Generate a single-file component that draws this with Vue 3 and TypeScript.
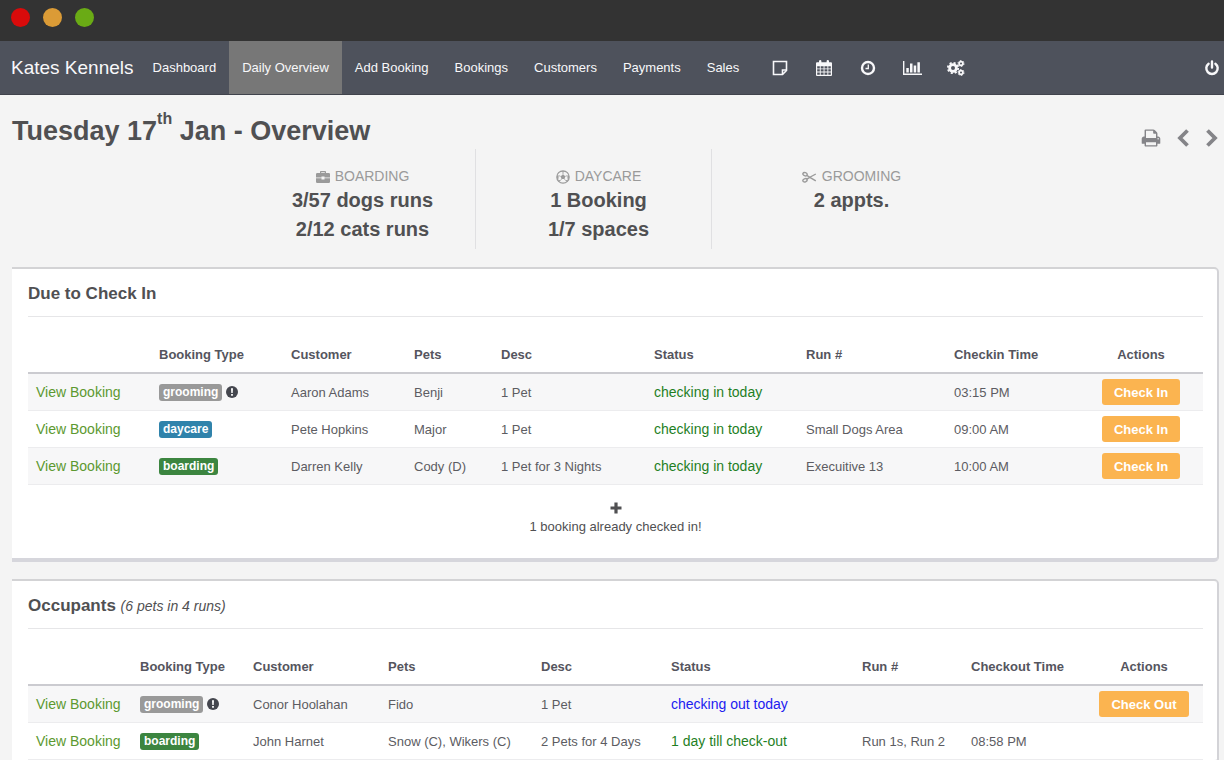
<script setup lang="ts">
interface Column { label: string; size: number }
interface Row {
  type: 'grooming' | 'daycare' | 'boarding'
  customer: string
  pets: string
  desc: string
  status: string
  leaving?: boolean
  run: string
  time: string
  action?: string
}
interface Panel {
  id: string
  title: string
  note?: string
  columns: Column[]
  rows: Row[]
  footer?: string
}

const links = ['Dashboard', 'Daily Overview', 'Add Booking', 'Bookings', 'Customers', 'Payments', 'Sales']
const active = 'Daily Overview'

const panels: Panel[] = [
  {
    id: 'checkin',
    title: 'Due to Check In',
    columns: [
      { label: '', size: 123 },
      { label: 'Booking Type', size: 132 },
      { label: 'Customer', size: 123 },
      { label: 'Pets', size: 87 },
      { label: 'Desc', size: 153 },
      { label: 'Status', size: 152 },
      { label: 'Run #', size: 148 },
      { label: 'Checkin Time', size: 133 },
      { label: 'Actions', size: 124 },
    ],
    rows: [
      { type: 'grooming', customer: 'Aaron Adams', pets: 'Benji', desc: '1 Pet', status: 'checking in today', run: '', time: '03:15 PM', action: 'Check In' },
      { type: 'daycare', customer: 'Pete Hopkins', pets: 'Major', desc: '1 Pet', status: 'checking in today', run: 'Small Dogs Area', time: '09:00 AM', action: 'Check In' },
      { type: 'boarding', customer: 'Darren Kelly', pets: 'Cody (D)', desc: '1 Pet for 3 Nights', status: 'checking in today', run: 'Execuitive 13', time: '10:00 AM', action: 'Check In' },
    ],
    footer: '1 booking already checked in!',
  },
  {
    id: 'occupants',
    title: 'Occupants',
    note: '(6 pets in 4 runs)',
    columns: [
      { label: '', size: 104 },
      { label: 'Booking Type', size: 113 },
      { label: 'Customer', size: 135 },
      { label: 'Pets', size: 153 },
      { label: 'Desc', size: 130 },
      { label: 'Status', size: 191 },
      { label: 'Run #', size: 109 },
      { label: 'Checkout Time', size: 122 },
      { label: 'Actions', size: 118 },
    ],
    rows: [
      { type: 'grooming', customer: 'Conor Hoolahan', pets: 'Fido', desc: '1 Pet', status: 'checking out today', leaving: true, run: '', time: '', action: 'Check Out' },
      { type: 'boarding', customer: 'John Harnet', pets: 'Snow (C), Wikers (C)', desc: '2 Pets for 4 Days', status: '1 day till check-out', run: 'Run 1s, Run 2', time: '08:58 PM' },
    ],
  },
]

function share(panel: Panel, column: Column): string {
  const total = panel.columns.reduce((sum, c) => sum + c.size, 0)
  return `${(column.size / total) * 100}%`
}
</script>

<template>
  <div class="app">
    <div class="titlebar">
      <span class="dot red"></span>
      <span class="dot amber"></span>
      <span class="dot green"></span>
    </div>

    <nav class="nav">
      <a class="brand" href="#">Kates Kennels</a>
      <a v-for="link in links" :key="link" href="#" class="nav-link" :class="{ active: link === active }">{{ link }}</a>
      <div class="nav-icons">
        <a href="#" class="nav-icon" aria-label="Notes">
          <svg viewBox="0 0 16 16" width="16" height="16" fill="none" stroke="currentColor" stroke-width="1.6">
            <path d="M1.500 1.500h13v9l-4 4h-9z" /><path d="M14.500 10h-4v4.500" />
          </svg>
        </a>
        <a href="#" class="nav-icon" aria-label="Calendar">
          <svg viewBox="0 0 16 16" width="16" height="16" fill="currentColor">
            <path fill-rule="evenodd" d="M1 2.300h2V1.200Q3 0 4.200 0T5.400 1.200v1.100h5.200V1.200Q10.600 0 11.800 0T13 1.200v1.100h2q1 0 1 1V15q0 1-1 1H1q-1 0-1-1V3.300q0-1 1-1zM1.200 6.200v2.300h2.600V6.200zm3.500 0v2.300h2.900V6.200zm3.800 0v2.300h2.900V6.200zm3.800 0v2.300h2.500V6.200zM1.200 9.300v2.300h2.600V9.300zm3.500 0v2.300h2.900V9.300zm3.800 0v2.300h2.900V9.300zm3.800 0v2.300h2.500V9.300zM1.200 12.400v2.400h2.600v-2.400zm3.500 0v2.400h2.900v-2.400zm3.800 0v2.400h2.900v-2.400zm3.800 0v2.400h2.500v-2.400z" />
          </svg>
        </a>
        <a href="#" class="nav-icon" aria-label="Time">
          <svg viewBox="0 0 16 16" width="16" height="16" fill="none" stroke="currentColor">
            <circle cx="8" cy="8" r="6" stroke-width="2.400" /><path d="M8.300 4.500v4H5.500" stroke-width="1.300" />
          </svg>
        </a>
        <a href="#" class="nav-icon" aria-label="Reports">
          <svg viewBox="0 0 19 16" width="19" height="16" fill="currentColor">
            <path d="M0 1h1.400v12.600H19V15H0zM3.300 8h2.500v4.500H3.300zM7 3.500h2.500v9H7zM10.700 5.500h2.500v7h-2.500zM14.400 2.300h2.500v10.200h-2.500z" />
          </svg>
        </a>
        <a href="#" class="nav-icon" aria-label="Settings">
          <svg viewBox="0 0 18 16" width="18" height="16" fill="none" stroke="currentColor">
            <circle cx="6" cy="8" r="3.400" stroke-width="2.800" />
            <circle cx="6" cy="8" r="5.200" stroke-width="1.800" stroke-dasharray="2.080 2" />
            <circle cx="14" cy="3.500" r="1.900" stroke-width="1.800" />
            <circle cx="14" cy="3.500" r="3" stroke-width="1" stroke-dasharray="1.570 1.570" />
            <circle cx="14" cy="12.500" r="1.900" stroke-width="1.800" />
            <circle cx="14" cy="12.500" r="3" stroke-width="1" stroke-dasharray="1.570 1.570" />
          </svg>
        </a>
      </div>
      <a href="#" class="power" aria-label="Log out">
        <svg viewBox="0 0 16 16" width="16" height="16" fill="none" stroke="currentColor" stroke-width="2.400" stroke-linecap="round">
          <path d="M4.600 3.700a5.700 5.700 0 1 0 6.800 0M8 1.500v6" />
        </svg>
      </a>
    </nav>

    <main class="content">
      <header class="heading">
        <h1>Tuesday 17<sup>th</sup> Jan - Overview</h1>
        <div class="tools">
          <button type="button" aria-label="Print">
            <svg viewBox="0 0 1792 1792" width="20" height="20" fill="currentColor">
              <path d="M448 1536h896v-256h-896v256zm0-640h896v-384h-160q-40 0-68-28t-28-68v-160h-640v640zm1152 64q0-26-19-45t-45-19-45 19-19 45 19 45 45 19 45-19 19-45zm128 0v416q0 13-9.500 22.500t-22.500 9.500h-224v160q0 40-28 68t-68 28h-960q-40 0-68-28t-28-68v-160h-224q-13 0-22.500-9.500t-9.500-22.500v-416q0-79 56.500-135.500t135.500-56.500h64v-544q0-40 28-68t68-28h672q40 0 88 20t76 48l152 152q28 28 48 76t20 88v256h64q79 0 135.500 56.500t56.500 135.500z" />
            </svg>
          </button>
          <button type="button" aria-label="Previous day">
            <svg viewBox="0 0 14 20" width="14" height="20" fill="none" stroke="currentColor" stroke-width="3.800"><path d="M11.500 2.500 4 10l7.500 7.500" /></svg>
          </button>
          <button type="button" aria-label="Next day">
            <svg viewBox="0 0 14 20" width="14" height="20" fill="none" stroke="currentColor" stroke-width="3.800"><path d="M2.500 2.500 10 10l-7.500 7.500" /></svg>
          </button>
        </div>
      </header>

      <section class="stats">
        <div class="stat">
          <div class="stat-label">
            <svg viewBox="0 0 14 14" width="14" height="14" fill="currentColor">
              <path fill-rule="evenodd" d="M4 3V1.800Q4 1 4.800 1h4.400q.8 0 .8.800V3h2.800q1.200 0 1.200 1.200V7.500H8.500v-1h-3v1H0V4.200Q0 3 1.200 3zm1.200 0h3.600V2.200H5.200zM0 8.300h5.500v1.200h3V8.300H14v3.500q0 1.200-1.200 1.200H1.200Q0 13 0 11.800z" />
            </svg>
            BOARDING
          </div>
          <strong>3/57 dogs runs</strong>
          <strong>2/12 cats runs</strong>
        </div>
        <div class="stat">
          <div class="stat-label">
            <svg viewBox="0 0 14 14" width="14" height="14" fill="none" stroke="currentColor">
              <circle cx="7" cy="7" r="6.200" stroke-width="1.200" />
              <path d="m7 4.600 2.400 1.700-.9 2.800h-3l-.9-2.800z" fill="currentColor" stroke="none" />
              <path d="M7 4.600V2.800M9.400 6.300l2-.7M8.500 9.100l1.200 1.600M5.500 9.100l-1.200 1.600M4.600 6.300l-2-.7" stroke-width=".8" />
              <path d="M4.800 1.200 7 2.800l2.200-1.600zM13 5.200l-1.600.5.100 3 1.300.2zM1 5.200l1.600.5-.1 3-1.300.2zM3 12l1.300-1.500-2.200-1zM11 12l-1.300-1.500 2.200-1z" fill="currentColor" stroke="none" />
            </svg>
            DAYCARE
          </div>
          <strong>1 Booking</strong>
          <strong>1/7 spaces</strong>
        </div>
        <div class="stat">
          <div class="stat-label">
            <svg viewBox="0 0 15 14" width="15" height="14" fill="none" stroke="currentColor" stroke-width="1.400">
              <ellipse cx="3" cy="4.200" rx="2.200" ry="1.600" transform="rotate(20 3 4.200)" />
              <ellipse cx="3" cy="10.300" rx="2.200" ry="1.600" transform="rotate(-20 3 10.300)" />
              <path d="m4.800 5.300 3 2 6-3.300M4.800 9.200l3-1.900 6 3.500" />
            </svg>
            GROOMING
          </div>
          <strong>2 appts.</strong>
        </div>
      </section>

      <section v-for="panel in panels" :key="panel.id" class="panel">
        <h2>{{ panel.title }} <em v-if="panel.note">{{ panel.note }}</em></h2>
        <table>
          <colgroup>
            <col v-for="(column, i) in panel.columns" :key="i" :style="{ width: share(panel, column) }" />
          </colgroup>
          <thead>
            <tr>
              <th v-for="(column, i) in panel.columns" :key="i" scope="col">{{ column.label }}</th>
            </tr>
          </thead>
          <tbody>
            <tr v-for="row in panel.rows" :key="row.customer">
              <td><a href="#" class="view">View Booking</a></td>
              <td>
                <div class="type">
                  <span class="tag" :class="row.type">{{ row.type }}</span>
                  <svg v-if="row.type === 'grooming'" viewBox="0 0 12 12" width="12" height="12" role="img" aria-label="Note">
                    <circle cx="6" cy="6" r="6" fill="#44464e" />
                    <path d="M5 2.200h2L6.700 7H5.300zM5.100 8h1.800v1.700H5.100z" fill="#fff" />
                  </svg>
                </div>
              </td>
              <td>{{ row.customer }}</td>
              <td>{{ row.pets }}</td>
              <td>{{ row.desc }}</td>
              <td><span class="status" :class="{ leaving: row.leaving }">{{ row.status }}</span></td>
              <td>{{ row.run }}</td>
              <td>{{ row.time }}</td>
              <td><button v-if="row.action" type="button" class="action">{{ row.action }}</button></td>
            </tr>
          </tbody>
        </table>
        <div v-if="panel.footer" class="more">
          <svg viewBox="0 0 12 12" width="12" height="12" fill="currentColor"><path d="M4.400.5h3.200v3.900h3.900v3.200H7.600v3.900H4.400V7.600H.5V4.400h3.900z" /></svg>
          <span>{{ panel.footer }}</span>
        </div>
      </section>
    </main>
  </div>
</template>

<style>
body {
  margin: 0;
  background: #f4f4f4;
  overflow: hidden;
}
</style>

<style scoped>
.app {
  height: 100vh;
  overflow: hidden;
  font-family: "Liberation Sans", Arial, sans-serif;
  font-size: 13px;
  color: #5c5c62;
}
a {
  color: inherit;
  text-decoration: none;
}
svg {
  display: block;
  flex: none;
}
button {
  border: 0;
  font: inherit;
  cursor: pointer;
}
.titlebar {
  display: flex;
  gap: 13px;
  height: 41px;
  padding: 8px 11px;
  box-sizing: border-box;
  background: #333;
}
.dot {
  width: 19px;
  height: 19px;
  border-radius: 50%;
}
.red { background: #d90b0b; }
.amber { background: #db9b36; }
.green { background: #6aab15; }
.nav {
  display: flex;
  align-items: stretch;
  height: 53px;
  border-bottom: 1px solid #40434c;
  background: #4e525c;
  color: #f8f8fa;
}
.nav > a,
.nav-icon {
  display: flex;
  align-items: center;
  white-space: nowrap;
}
.brand {
  padding: 0 6px 0 11px;
  font-size: 19px;
}
.nav-link {
  padding: 0 13px;
}
.nav-link.active {
  background: #777;
}
.nav-icons {
  display: flex;
  margin-left: 6px;
}
.nav-icon {
  justify-content: center;
  width: 44px;
}
.power {
  margin-left: auto;
  padding-right: 4px;
}
.content {
  padding: 0 5px 0 12px;
}
.heading {
  display: flex;
  justify-content: space-between;
  height: 54px;
}
h1 {
  margin: 0;
  padding-top: 20px;
  font-size: 27px;
  line-height: 32px;
  color: #505052;
  white-space: nowrap;
}
sup {
  font-size: 16px;
  line-height: 0;
  vertical-align: 16px;
}
.tools {
  display: flex;
  align-items: center;
  gap: 15px;
  padding-top: 32px;
  color: #848488;
}
.tools button {
  padding: 0;
  background: none;
  color: inherit;
}
.stats {
  display: grid;
  grid-template-columns: 236px 236px 280px;
  justify-content: center;
  min-height: 100px;
  margin-bottom: 18px;
}
.stat {
  display: flex;
  flex-direction: column;
  align-items: center;
  padding: 18px 0 0 11px;
  border-right: 1px solid #e0e0e2;
}
.stat:last-child {
  padding-left: 0;
  border-right: 0;
}
.stat-label {
  display: flex;
  align-items: center;
  gap: 5px;
  font-size: 14px;
  line-height: 19px;
  color: #9a9a9a;
}
.stat strong {
  font-size: 20px;
  line-height: 29px;
  color: #505052;
}
.panel {
  margin-bottom: 17px;
  padding: 0 14px 0 16px;
  border-top: 2px solid #d3d3d5;
  border-right: 2px solid #d3d3d7;
  border-bottom: 4px solid #d6d6dc;
  border-radius: 0 5px 5px 0;
  background: #fff;
}
h2 {
  margin: 0;
  padding: 15px 0 12px;
  border-bottom: 1px solid #e6e6e8;
  font-size: 17px;
  line-height: 20px;
  color: #505052;
}
h2 em {
  font-size: 14px;
  font-weight: normal;
}
table {
  width: 100%;
  margin-top: 20px;
  table-layout: fixed;
  border-collapse: separate;
  border-spacing: 0;
}
th,
td {
  padding: 0 8px;
  text-align: left;
  white-space: nowrap;
}
th {
  height: 35px;
  border-bottom: 2px solid #cbcbd0;
  font-weight: bold;
  color: #55555e;
}
td {
  height: 36px;
  border-bottom: 1px solid #ececee;
}
tbody tr:nth-child(odd) {
  background: #f7f7f8;
}
th:last-child,
td:last-child {
  text-align: center;
}
.view {
  font-size: 14px;
  color: #5c9930;
}
.status {
  font-size: 14px;
  color: #1f7f1f;
}
.status.leaving {
  color: #2020f0;
}
.type {
  display: flex;
  align-items: center;
  gap: 4px;
}
.tag {
  padding: 0 4px;
  border-radius: 3px;
  font-size: 12px;
  font-weight: bold;
  line-height: 17px;
  color: #fff;
}
.grooming { background: #999; }
.daycare { background: #3083ab; }
.boarding { background: #3c8540; }
.action {
  height: 26px;
  padding: 0 12px;
  border-radius: 3px;
  background: #fbb450;
  color: #fff;
  font-weight: bold;
}
.more {
  display: flex;
  flex-direction: column;
  align-items: center;
  gap: 4px;
  padding: 17px 0 22px;
  line-height: 18px;
  color: #505052;
}
</style>
